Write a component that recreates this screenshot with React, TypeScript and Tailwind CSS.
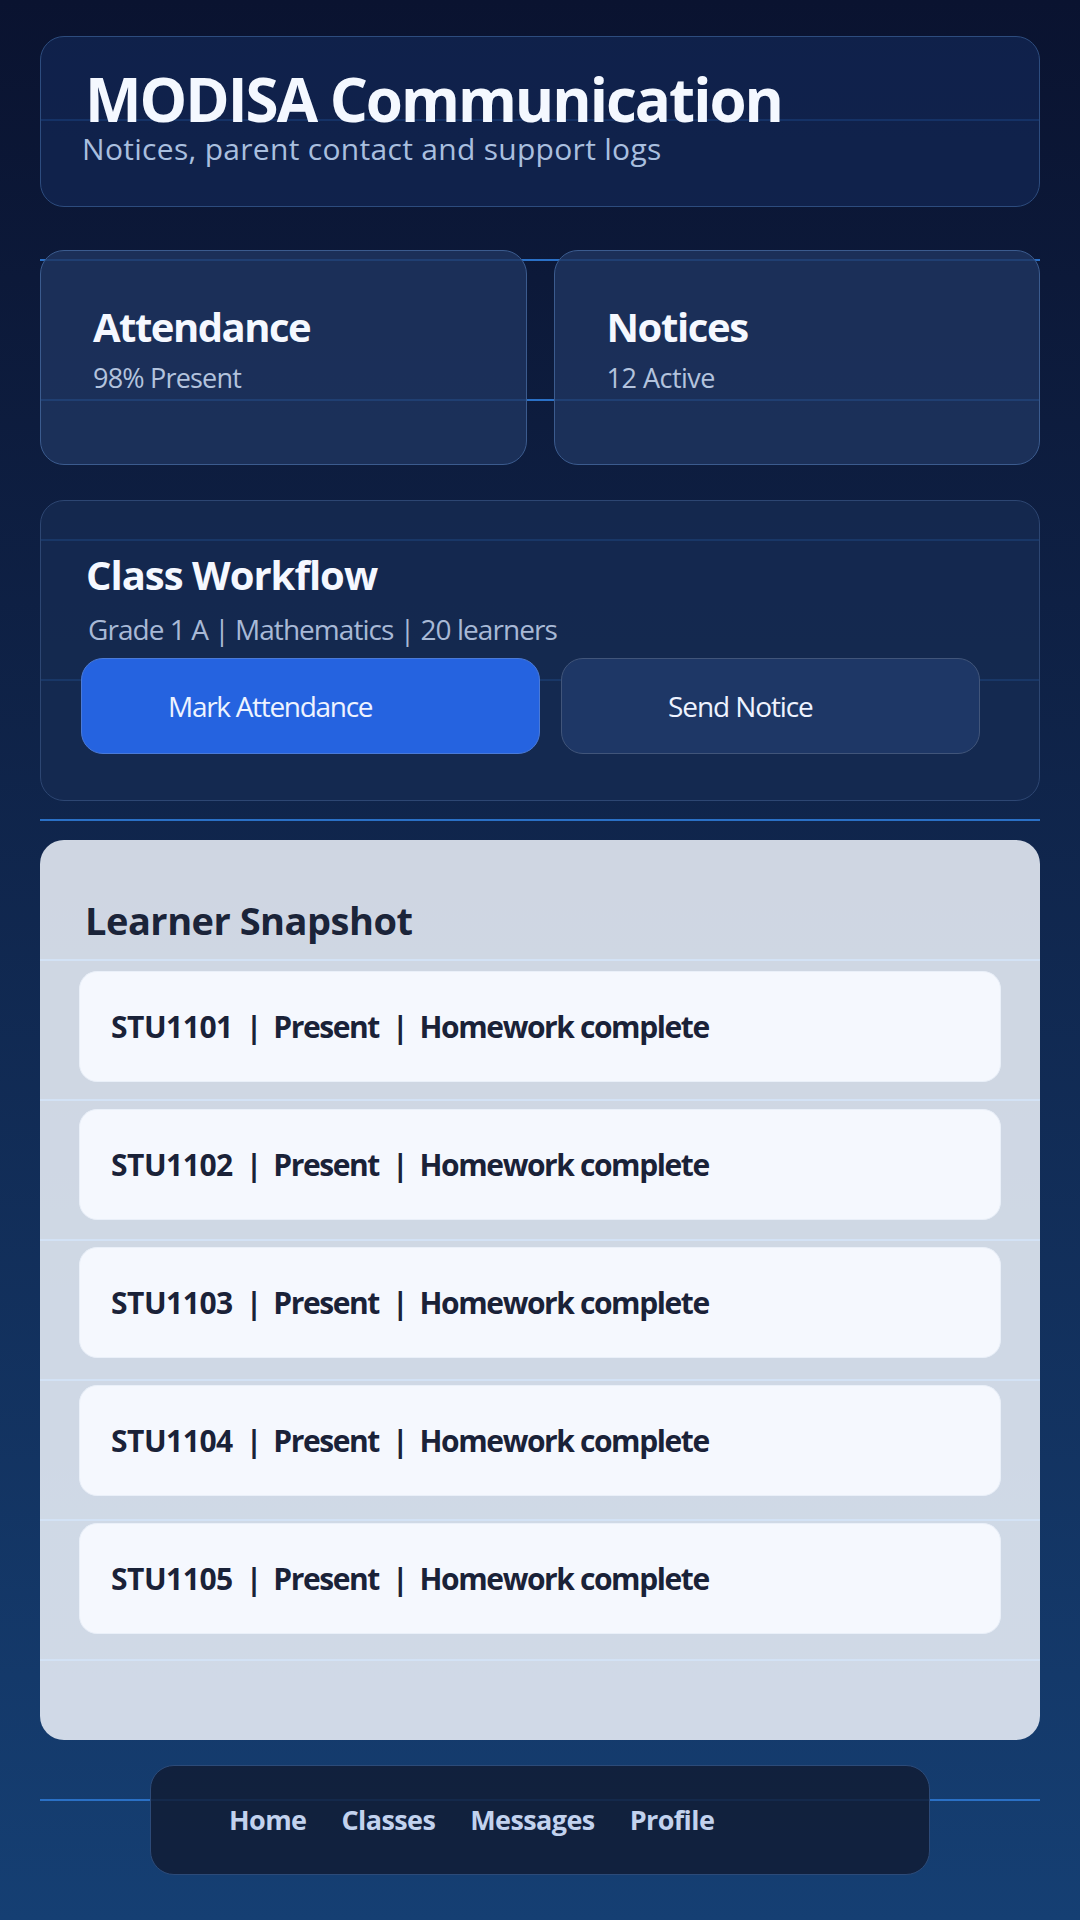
import React from "react";

const rows = ["STU1101", "STU1102", "STU1103", "STU1104", "STU1105"];

export default function App() {
  return (
    <div className="min-h-[1920px] w-full bg-linear-to-b from-[#0a1330] to-[#153f73] px-[40px] pt-[36px] font-['Open_Sans',sans-serif]">
      <div className="flex flex-col bg-[image:repeating-linear-gradient(180deg,transparent_0px,transparent_83px,#2a70c6_83px,#2a70c6_85px,transparent_85px,transparent_140px)]">
        {/* Header */}
        <div className="h-[171px] rounded-[24px] border border-[#2d4c7e] bg-[rgba(17,37,80,0.82)] pl-[38px] pt-[32px]">
          <h1 className="ml-[6px] text-[60px] font-bold leading-[60px] tracking-[-2px] text-[#f4f8ff]">
            MODISA Communication
          </h1>
          <p className="ml-[3px] mt-[5px] text-[30px] leading-[30px] tracking-[0.3px] text-[#a9bfdf]">
            Notices, parent contact and support logs
          </p>
        </div>

        {/* Stats */}
        <div className="mt-[43px] grid h-[215px] grid-cols-2 gap-[27px]">
          <div className="rounded-[24px] border border-[#3b5b8e] bg-[rgba(30,52,95,0.82)] pl-[52px] pt-[56px]">
            <div className="text-[40px] font-bold leading-[40px] tracking-[-1.5px] text-[#f5f8ff]">Attendance</div>
            <div className="mt-[17px] text-[27px] leading-[27px] tracking-[-0.8px] text-[#b3c3dd]">98% Present</div>
          </div>
          <div className="rounded-[24px] border border-[#3b5b8e] bg-[rgba(30,52,95,0.82)] pl-[52px] pt-[56px]">
            <div className="text-[40px] font-bold leading-[40px] tracking-[-1.4px] text-[#f5f8ff]">Notices</div>
            <div className="mt-[17px] text-[27px] leading-[27px] tracking-[-0.5px] text-[#b3c3dd]">12 Active</div>
          </div>
        </div>

        {/* Workflow */}
        <div className="mt-[35px] h-[301px] rounded-[24px] border border-[#2d4672] bg-[rgba(22,43,82,0.82)] pl-[40px] pt-[54px]">
          <div className="ml-[5px] text-[40px] font-bold leading-[40px] tracking-[-1px] text-[#f5f8ff]">Class Workflow</div>
          <div className="ml-[7px] mt-[20px] text-[28px] leading-[28px] tracking-[-0.95px] text-[#a8b9d6]">
            Grade 1 A | Mathematics | 20 learners
          </div>
          <div className="mt-[15px] flex gap-[21px]">
            <button className="h-[96px] w-[459px] rounded-[22px] border border-[#4a7ad8] bg-[#2563e0] pl-[86px] text-left text-[28px] tracking-[-1.3px] text-[#eef3ff]">
              Mark Attendance
            </button>
            <button className="h-[96px] w-[419px] rounded-[22px] border border-[#41557a] bg-[#1e3766] pl-[106px] text-left text-[28px] tracking-[-1.1px] text-[#eef3ff]">
              Send Notice
            </button>
          </div>
        </div>

        {/* Learner Snapshot */}
        <div className="mt-[39px] h-[900px] rounded-[24px] bg-[rgba(241,246,253,0.85)] px-[39px] pt-[61px]">
          <div className="ml-[6px] text-[38px] font-bold leading-[38px] tracking-[-0.5px] text-[#1b2439]">Learner Snapshot</div>
          <div className="mt-[32px] flex flex-col gap-[27px]">
            {rows.map((id) => (
              <div
                key={id}
                className="flex h-[111px] items-center rounded-[18px] border border-[#eaf0f9] bg-[#f5f8fe] pl-[31px] text-[30px] font-bold text-[#1a2238]"
              >
                <span className="tracking-[-0.5px]">{id}</span>
                <span className="ml-[13px] mr-[11px]">|</span>
                <span className="tracking-[-1.4px]">Present</span>
                <span className="ml-[13px] mr-[11px]">|</span>
                <span className="tracking-[-1.4px]">Homework complete</span>
              </div>
            ))}
          </div>
        </div>

        {/* Nav */}
        <div className="mx-auto mt-[25px] flex h-[110px] w-[780px] items-center gap-[35px] rounded-[24px] border border-[#2c4a78] bg-[rgba(17,28,53,0.85)] pl-[78px] text-[27px] font-bold tracking-[-0.6px] text-[#c2d2ee]">
          <span>Home</span>
          <span>Classes</span>
          <span>Messages</span>
          <span>Profile</span>
        </div>
      </div>
    </div>
  );
}
